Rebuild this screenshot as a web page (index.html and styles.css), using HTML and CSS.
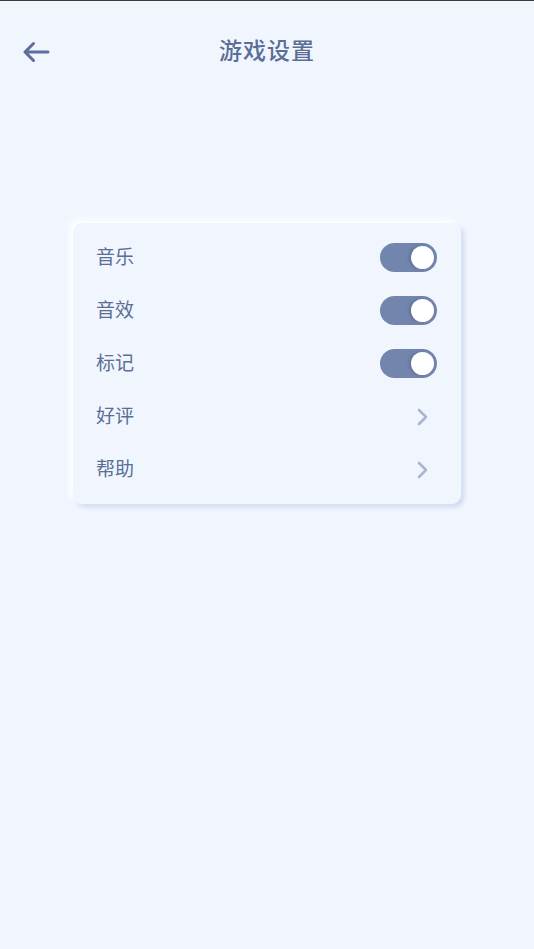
FILE: index.html
```html
<!DOCTYPE html>
<html lang="zh">
<head>
  <meta charset="UTF-8" />
  <title>游戏设置</title>
  <link rel="stylesheet" href="styles.css">
</head>
<body>

<div class="top-line"></div>

<div class="header">
  <button class="back-btn" aria-label="返回">
    <svg width="28" height="22" viewBox="0 0 28 22">
      <path d="M26 11H3M11.5 2.5L3 11l8.5 8.5" fill="none" stroke="#5b6f99" stroke-width="3" stroke-linecap="round" stroke-linejoin="round"/>
    </svg>
  </button>
  <h1 class="title">游戏设置</h1>
</div>

<div class="settings-card">
  <div class="row">
    <span class="label">音乐</span>
    <span class="toggle on"><span class="knob"></span></span>
  </div>
  <div class="row">
    <span class="label">音效</span>
    <span class="toggle on"><span class="knob"></span></span>
  </div>
  <div class="row">
    <span class="label">标记</span>
    <span class="toggle on"><span class="knob"></span></span>
  </div>
  <div class="row">
    <span class="label">好评</span>
    <svg class="chevron" width="14" height="20" viewBox="0 0 14 20">
      <path d="M3 3l7 7-7 7" fill="none" stroke="#a9b6d0" stroke-width="2.6" stroke-linecap="round" stroke-linejoin="round"/>
    </svg>
  </div>
  <div class="row">
    <span class="label">帮助</span>
    <svg class="chevron" width="14" height="20" viewBox="0 0 14 20">
      <path d="M3 3l7 7-7 7" fill="none" stroke="#a9b6d0" stroke-width="2.6" stroke-linecap="round" stroke-linejoin="round"/>
    </svg>
  </div>
</div>

</body>
</html>
```

FILE: styles.css
```css
body {
  font-family: "Noto Sans CJK SC", "Noto Sans", sans-serif;
  background: #f1f6fe;
  color: #5a6e96;
  margin: 0;
  min-height: 100vh;
}

.top-line {
  height: 1px;
  background: #3a3a3a;
}

.header {
  display: flex;
  align-items: center;
  justify-content: center;
  height: 100px;
  position: relative;
}

.back-btn {
  position: absolute;
  left: 22px;
  top: 40px;
  padding: 0;
  border: none;
  background: none;
  cursor: pointer;
  display: flex;
}

.title {
  margin: 0 0 4px 0;
  font-size: 23px;
  font-weight: 500;
  color: #5a6e96;
  letter-spacing: 1px;
}

.settings-card {
  margin: 122px 0 0 73px;
  width: 388px;
  padding: 8px 0;
  border-radius: 9px;
  background: #f1f6fe;
  box-shadow: -3px -3px 6px #ffffff, 3px 3px 5px #ccd8ee;
}

.row {
  display: flex;
  align-items: center;
  justify-content: space-between;
  height: 53px;
  padding: 0 24px 0 23px;
}

.label {
  font-size: 19px;
  color: #5a6e96;
  padding-bottom: 4px;
}

.toggle {
  width: 57px;
  height: 29px;
  border-radius: 15px;
  background: #7285ad;
  display: flex;
  align-items: center;
  justify-content: flex-end;
  padding: 0 3px;
  box-sizing: border-box;
}

.knob {
  width: 23px;
  height: 23px;
  border-radius: 50%;
  background: #ffffff;
  box-shadow: -2px 0 3px rgba(60, 80, 120, 0.35);
}

.chevron {
  margin-right: 7px;
}
```
